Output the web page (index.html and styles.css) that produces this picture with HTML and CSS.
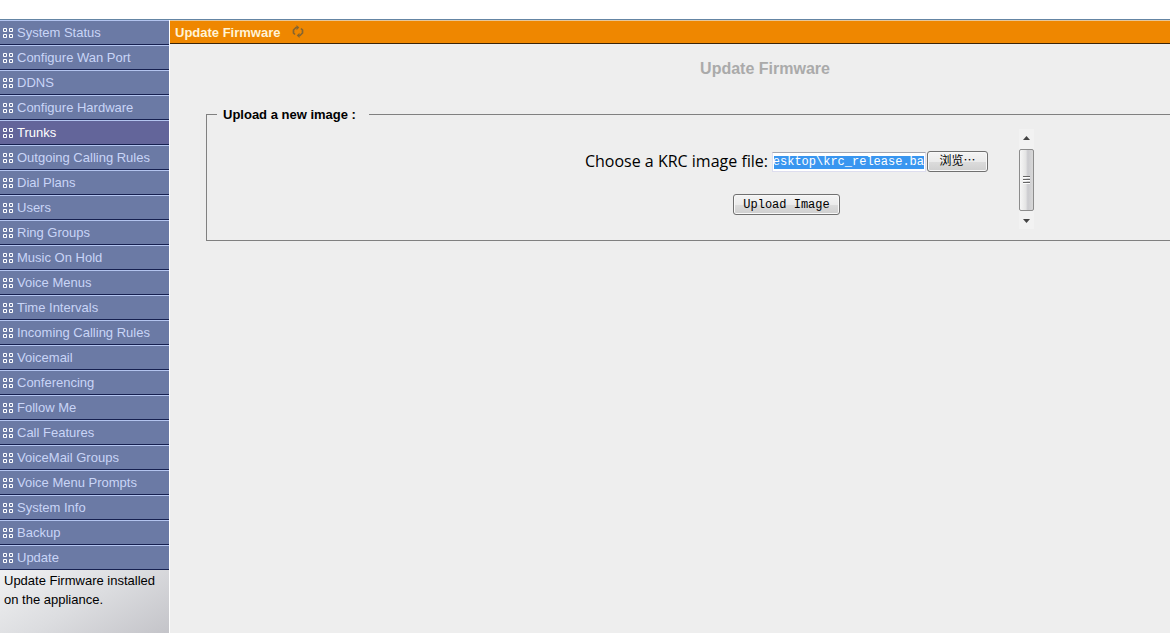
FILE: index.html
```
<!DOCTYPE html>
<html lang="en">
<head>
<meta charset="utf-8">
<title>Update Firmware</title>
<link rel="stylesheet" href="styles.css">
</head>
<body>
<svg class="defs" aria-hidden="true">
  <symbol id="grid" viewBox="0 0 10 10">
    <g fill="none" stroke="#fff"><path d="M.5.5h3v3h-3zM6.5.5h3v3h-3zM.5 6.5h3v3h-3zM6.5 6.5h3v3h-3z"/></g>
  </symbol>
</svg>
<div class="layout">
  <aside class="sidebar">
    <nav class="menu">
      <a href="#"><svg><use href="#grid"/></svg>System Status</a>
      <a href="#"><svg><use href="#grid"/></svg>Configure Wan Port</a>
      <a href="#"><svg><use href="#grid"/></svg>DDNS</a>
      <a href="#"><svg><use href="#grid"/></svg>Configure Hardware</a>
      <a href="#" class="active"><svg><use href="#grid"/></svg>Trunks</a>
      <a href="#"><svg><use href="#grid"/></svg>Outgoing Calling Rules</a>
      <a href="#"><svg><use href="#grid"/></svg>Dial Plans</a>
      <a href="#"><svg><use href="#grid"/></svg>Users</a>
      <a href="#"><svg><use href="#grid"/></svg>Ring Groups</a>
      <a href="#"><svg><use href="#grid"/></svg>Music On Hold</a>
      <a href="#"><svg><use href="#grid"/></svg>Voice Menus</a>
      <a href="#"><svg><use href="#grid"/></svg>Time Intervals</a>
      <a href="#"><svg><use href="#grid"/></svg>Incoming Calling Rules</a>
      <a href="#"><svg><use href="#grid"/></svg>Voicemail</a>
      <a href="#"><svg><use href="#grid"/></svg>Conferencing</a>
      <a href="#"><svg><use href="#grid"/></svg>Follow Me</a>
      <a href="#"><svg><use href="#grid"/></svg>Call Features</a>
      <a href="#"><svg><use href="#grid"/></svg>VoiceMail Groups</a>
      <a href="#"><svg><use href="#grid"/></svg>Voice Menu Prompts</a>
      <a href="#"><svg><use href="#grid"/></svg>System Info</a>
      <a href="#"><svg><use href="#grid"/></svg>Backup</a>
      <a href="#"><svg><use href="#grid"/></svg>Update</a>
    </nav>
    <p class="hint">Update Firmware installed on the appliance.</p>
  </aside>
  <main class="main">
    <header class="titlebar">
      <span>Update Firmware</span>
      <svg class="refresh" viewBox="0 0 12 13" aria-hidden="true">
        <path d="M5 2.500H4L1.500 5v3L3 9.500M7 10.500h1L10.500 8V5L9 3.500" fill="none" stroke="#86652f" stroke-width="1.700"/>
        <path d="M4.500 0v5.200L7.300 2.500zM7.500 13V7.800L4.700 10.500z" fill="#86652f"/>
      </svg>
    </header>
    <div class="content">
      <h1>Update Firmware</h1>
      <fieldset class="panel">
        <legend>Upload a new image :</legend>
        <div class="frame">
          <form class="upload">
            <div class="row">
              <label for="path">Choose a KRC image file:</label>
              <input id="path" class="path" type="text" dir="rtl" value="Desktop\krc_release.ba">
              <button type="button" class="btn browse">浏览<span>⋯</span></button>
            </div>
            <button type="button" class="btn">Upload Image</button>
          </form>
          <div class="scrollbar">
            <svg viewBox="0 0 7 4"><path d="M3.500 0 7 4H0z" fill="#444"/></svg>
            <div class="thumb"><i></i><i></i><i></i></div>
            <svg viewBox="0 0 7 4"><path d="M0 0h7L3.500 4z" fill="#444"/></svg>
          </div>
        </div>
      </fieldset>
    </div>
  </main>
</div>
</body>
</html>
```
FILE: styles.css
```
* { box-sizing: border-box; }
body {
  margin: 0;
  padding-top: 19px;
  background: #fff;
  font-family: Arial, "Liberation Sans", sans-serif;
  font-size: 13px;
  overflow: hidden;
}
.defs { display: none; }
.layout {
  display: flex;
  min-height: calc(100vh - 19px);
  border-top: 1px solid #6485a4;
}
.sidebar {
  flex: none;
  width: 170px;
  display: flex;
  flex-direction: column;
  border-right: 1px solid #fff;
}
.menu a {
  display: flex;
  align-items: center;
  gap: 4px;
  height: 25px;
  padding-left: 3px;
  border-top: 1px solid #b3c4ef;
  border-bottom: 1px solid #16204f;
  background: #6b7aa5;
  color: #c9d5f7;
  text-decoration: none;
}
.menu svg { width: 10px; height: 10px; margin-top: 1px; }
.menu .active { background: #63659a; color: #fff; }
.hint {
  flex: 1;
  margin: 0;
  padding: 1px 4px;
  line-height: 19px;
  color: #000;
  background: linear-gradient(150deg, #f0f1f2 0%, #dcdde0 50%, #c4c4c9 100%);
}
.main {
  flex: 1;
  min-width: 0;
  overflow: hidden;
  background: #eee;
}
.titlebar {
  display: flex;
  align-items: center;
  gap: 12px;
  height: 24px;
  padding-left: 5px;
  border-top: 1px solid #e6c79a;
  border-bottom: 1px solid #3a2408;
  background: #ef8700;
  color: #fff3d6;
  font-weight: bold;
}
.refresh { width: 12px; height: 13px; margin-bottom: 2px; }
.content { margin: 0 -154px 0 36px; }
h1 {
  margin: 0;
  padding: 15px 0 27px;
  font-size: 16px;
  line-height: 20px;
  text-align: center;
  color: #aaa;
}
.panel {
  margin: 0;
  padding: 6px 0 11px;
  border: 1px solid #808080;
}
legend {
  margin-left: 10px;
  padding: 0 13px 0 6px;
  font-weight: bold;
  line-height: 17px;
}
.frame {
  display: flex;
  width: 480px;
  margin: 0 auto;
  box-sizing: content-box;
  padding-left: 58px;
}
.upload {
  flex: 1;
  display: flex;
  flex-direction: column;
  align-items: center;
  gap: 22px;
  padding-top: 22px;
}
.row { display: flex; align-items: center; white-space: nowrap; }
.row label {
  margin-right: 4px;
  font: 16px/19px "Trebuchet MS", "Open Sans", sans-serif;
}
.path {
  width: 154px;
  height: 20px;
  padding: 3px 1px 2px;
  border: 1px solid #dde;
  border-top-color: #a5a7b0;
  font: 12px/13px "Liberation Mono", monospace;
  color: #fff;
  background: linear-gradient(#3996f0, #3996f0) content-box, #fff;
}
.btn {
  height: 21px;
  padding: 1px 9px 0;
  border: 1px solid #707070;
  border-radius: 3px;
  background: linear-gradient(#f4f4f4, #ebebeb 50%, #dcdcdc 51%, #cfcfcf);
  box-shadow: inset 0 0 0 1px #f8f8f8;
  font: 12px/16px "Liberation Mono", "Noto Sans CJK SC", monospace;
  color: #000;
}
.browse { width: 61px; margin-left: 1px; }
.scrollbar {
  display: flex;
  flex-direction: column;
  align-items: center;
  justify-content: space-between;
  width: 15px;
  height: 100px;
  padding: 7px 0 6px;
  background: #f2f2f2;
}
.scrollbar svg { width: 7px; height: 4px; }
.thumb {
  display: flex;
  flex-direction: column;
  align-items: center;
  justify-content: center;
  gap: 1px;
  width: 15px;
  height: 62px;
  border: 1px solid #8c8c8c;
  border-radius: 2px;
  background: linear-gradient(90deg, #f6f6f6, #e4e4e4 45%, #cbcbcf 60%, #d8d8d8);
}
.thumb i { width: 7px; height: 2px; background: #666; border-bottom: 1px solid #fff; }
```
